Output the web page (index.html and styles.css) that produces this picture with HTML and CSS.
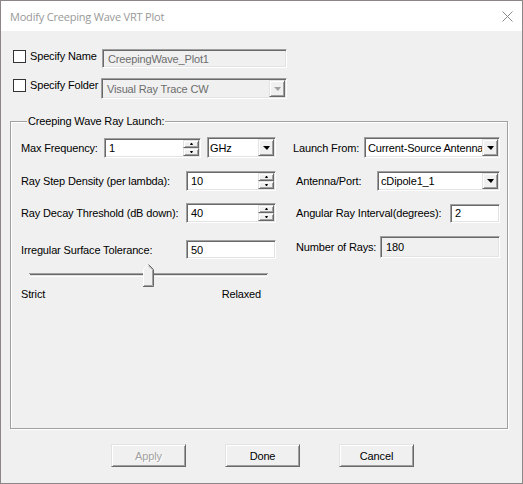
FILE: index.html
```html
<!DOCTYPE html>
<html lang="en">
<head>
    <meta charset="UTF-8">
    <meta name="viewport" content="width=device-width, initial-scale=1.0">
    <title>Modify Creeping Wave VRT Plot</title>
    <link rel="stylesheet" href="styles.css">
</head>
<body>
    <!-- Dialog start-->
    <div class="window">
        <div class="titlebar">
            <span class="title">Modify Creeping Wave VRT Plot</span>
            <svg class="close" width="11" height="11" viewBox="0 0 11 11">
                <path d="M0.5 0.5 L10.5 10.5 M10.5 0.5 L0.5 10.5" stroke="#8a8a8a" stroke-width="1" fill="none"/>
            </svg>
        </div>

        <div class="top-row row-name">
            <span class="check"></span>
            <label class="check-label name-label">Specify Name</label>
            <div class="field disabled name-box"><span class="val">CreepingWave_Plot1</span></div>
        </div>
        <div class="top-row row-folder">
            <span class="check"></span>
            <label class="check-label folder-label">Specify Folder</label>
            <div class="combo disabled folder-box">
                <span class="combo-text">Visual Ray Trace CW</span>
                <span class="drop raised"><i class="tri"></i></span>
            </div>
        </div>

        <div class="group">
            <div class="group-title">Creeping Wave Ray Launch:</div>
            <div class="grid">
                <div class="cell">
                    <label class="lbl-freq">Max Frequency:</label>
                    <div class="field spin freq-box">
                        <span class="val">1</span>
                        <span class="spin-btns"><span class="raised"><i class="up"></i></span><span class="raised"><i class="down"></i></span></span>
                    </div>
                    <div class="combo unit-box">
                        <span class="combo-text">GHz</span>
                        <span class="drop raised"><i class="tri"></i></span>
                    </div>
                </div>
                <div class="cell">
                    <label class="lbl-launch">Launch From:</label>
                    <div class="combo launch-box">
                        <span class="combo-text">Current-Source Antenna</span>
                        <span class="drop raised"><i class="tri"></i></span>
                    </div>
                </div>

                <div class="cell">
                    <label class="lbl">Ray Step Density (per lambda):</label>
                    <div class="field spin num-box">
                        <span class="val">10</span>
                        <span class="spin-btns"><span class="raised"><i class="up"></i></span><span class="raised"><i class="down"></i></span></span>
                    </div>
                </div>
                <div class="cell">
                    <label class="lbl lbl-r">Antenna/Port:</label>
                    <div class="combo port-box">
                        <span class="combo-text">cDipole1_1</span>
                        <span class="drop raised"><i class="tri"></i></span>
                    </div>
                </div>

                <div class="cell">
                    <label class="lbl">Ray Decay Threshold (dB down):</label>
                    <div class="field spin num-box">
                        <span class="val">40</span>
                        <span class="spin-btns"><span class="raised"><i class="up"></i></span><span class="raised"><i class="down"></i></span></span>
                    </div>
                </div>
                <div class="cell">
                    <label class="lbl lbl-r">Angular Ray Interval(degrees):</label>
                    <div class="field angle-box"><span class="val">2</span></div>
                </div>

                <div class="cell cell-end">
                    <label class="lbl">Irregular Surface Tolerance:</label>
                    <div class="field tol-box"><span class="val">50</span></div>
                </div>
                <div class="cell">
                    <label class="lbl lbl-r">Number of Rays:</label>
                    <div class="field disabled rays-box"><span class="val">180</span></div>
                </div>
            </div>

            <div class="slider">
                <svg class="thumb" width="11" height="23" viewBox="0 0 11 23">
                    <polygon points="0,5 5,0 10,5 10,22 0,22" fill="#f0f0f0"/>
                    <polyline points="0.5,22 0.5,5.5 5.5,0.5" stroke="#fff" fill="none"/>
                    <polyline points="5.5,0.5 10.5,5.5 10.5,22.5 0,22.5" stroke="#696969" fill="none"/>
                    <polyline points="5.5,1.8 9.5,5.8 9.5,21.5 1,21.5" stroke="#a0a0a0" fill="none"/>
                </svg>
            </div>
            <div class="ticks">
                <span>Strict</span>
                <span>Relaxed</span>
            </div>
        </div>

        <div class="buttons">
            <button class="btn raised" disabled>Apply</button>
            <button class="btn raised">Done</button>
            <button class="btn raised">Cancel</button>
        </div>
    </div>
    <!-- Dialog end-->
</body>
</html>
```

FILE: styles.css
```css
body{
    margin: 0;
}
.window{
    width: 523px;
    height: 484px;
    box-sizing: border-box;
    border: 1px solid #8c8686;
    background-color: #f0f0f0;
    font-family: "Liberation Sans", Arial, sans-serif;
    font-size: 11px;
    letter-spacing: -0.15px;
    color: #000;
}
.titlebar{
    height: 30px;
    background-color: #fff;
    display: flex;
    align-items: center;
    justify-content: space-between;
    padding: 0 9px 0 9px;
}
.title{
    font-family: "Open Sans", "Noto Sans", sans-serif;
    font-size: 11px;
    letter-spacing: -0.2px;
    color: #999;
}

/* sunken edit / combo boxes */
.field,
.combo{
    box-sizing: border-box;
    border: 1px solid;
    border-color: #a0a0a0 #fff #fff #a0a0a0;
    box-shadow: inset 1px 1px #696969, inset -1px -1px #e3e3e3;
    background-color: #fff;
    padding: 1px;
    display: flex;
    align-items: center;
    white-space: nowrap;
}
.field .val{
    flex: 1;
    padding-left: 3px;
}
.disabled{
    background-color: #f0f0f0;
    color: #6d6d6d;
}
.combo{
    align-items: stretch;
}
.combo-text{
    flex: 1;
    overflow: hidden;
    padding-left: 1px;
    display: flex;
    align-items: center;
}
.raised{
    box-sizing: border-box;
    background-color: #f0f0f0;
    border: 1px solid;
    border-color: #e3e3e3 #696969 #696969 #e3e3e3;
    box-shadow: inset 1px 1px #fff, inset -1px -1px #a0a0a0;
}
.drop{
    width: 16px;
    flex-shrink: 0;
    display: flex;
    align-items: center;
    justify-content: center;
}
.tri{
    width: 0;
    height: 0;
    border-left: 4px solid transparent;
    border-right: 3px solid transparent;
    border-top: 4px solid #000;
    margin-top: 1px;
}
.disabled .tri{
    border-top-color: #a0a0a0;
}
.spin-btns{
    width: 16px;
    align-self: stretch;
    display: flex;
    flex-direction: column;
}
.spin-btns span{
    flex: 1;
    display: flex;
    align-items: center;
    justify-content: center;
}
.up,
.down{
    width: 1px;
    height: 0;
    border-left: 1px solid transparent;
    border-right: 1px solid transparent;
}
.up{
    border-bottom: 2px solid #000;
}
.down{
    border-top: 2px solid #000;
}

/* top rows */
.top-row{
    display: flex;
    align-items: flex-start;
    padding-left: 12px;
}
.row-name{
    margin-top: 18px;
    height: 19px;
}
.row-folder{
    margin-top: 10px;
    height: 21px;
}
.check{
    width: 13px;
    height: 13px;
    box-sizing: border-box;
    border: 1px solid #333;
    background-color: #fff;
    margin-top: 1px;
}
.check-label{
    margin: 1px 0 0 4px;
    line-height: 13px;
}
.name-label{
    width: 72px;
}
.folder-label{
    width: 71px;
}
.name-box{
    width: 185px;
    height: 19px;
}
.folder-box{
    width: 186px;
    height: 21px;
}
.folder-box .combo-text{
    padding-left: 4px;
}
.name-box .val{
    padding-left: 4px;
}

/* group box */
.group{
    box-sizing: border-box;
    width: 498px;
    height: 308px;
    margin: 22px 0 0 9px;
    padding-left: 10px;
    border: 1px solid #a0a0a0;
    box-shadow: inset 1px 1px #fff, 1px 1px #fff;
}
.group-title{
    width: fit-content;
    margin: -7px 0 0 6px;
    padding: 0 1px;
    line-height: 13px;
    background-color: #f0f0f0;
}
.grid{
    display: grid;
    grid-template-columns: 255px 207px;
    grid-template-rows: 21px 21px 20px 24px;
    column-gap: 17px;
    row-gap: 12px;
    margin-top: 9px;
}
.cell{
    display: flex;
    align-items: center;
}
.cell-end{
    align-self: end;
}
.lbl{
    flex: 1;
}
.lbl-r{
    padding-left: 3px;
}
.lbl-freq{
    width: 83px;
}
.lbl-launch{
    width: 71px;
}
.freq-box{
    width: 97px;
    height: 20px;
}
.unit-box{
    width: 69px;
    height: 21px;
    margin-left: 6px;
}
.launch-box{
    width: 136px;
    height: 21px;
}
.launch-box .combo-text,
.port-box .combo-text{
    padding-left: 2px;
}
.num-box{
    width: 90px;
    height: 20px;
}
.port-box{
    width: 123px;
    height: 20px;
}
.angle-box{
    width: 50px;
    height: 19px;
}
.tol-box{
    width: 90px;
    height: 19px;
}
.rays-box{
    width: 120px;
    height: 22px;
    color: #000;
}
.rays-box .val{
    padding-left: 4px;
}

/* slider */
.slider{
    width: 239px;
    height: 23px;
    margin: 5px 0 0 8px;
    display: flex;
    justify-content: center;
    background:
        linear-gradient(#a0a0a0, #a0a0a0) 0 9px / 100% 1px no-repeat,
        linear-gradient(#696969, #696969) 1px 10px / calc(100% - 2px) 1px no-repeat,
        linear-gradient(#e3e3e3, #e3e3e3) 1px 11px / calc(100% - 2px) 1px no-repeat,
        linear-gradient(#fff, #fff) 0 12px / 100% 1px no-repeat;
}
.thumb{
    display: block;
}
.ticks{
    width: 240px;
    margin-top: 1px;
    display: flex;
    justify-content: space-between;
    line-height: 13px;
}

/* buttons */
.buttons{
    display: flex;
    gap: 39px;
    margin-top: 15px;
    padding-left: 110px;
}
.btn{
    width: 75px;
    height: 23px;
    padding: 0;
    font-family: "Liberation Sans", Arial, sans-serif;
    font-size: 11px;
    letter-spacing: -0.15px;
    color: #000;
}
.btn:disabled{
    color: #a0a0a0;
    text-shadow: 1px 1px #fff;
}
```
